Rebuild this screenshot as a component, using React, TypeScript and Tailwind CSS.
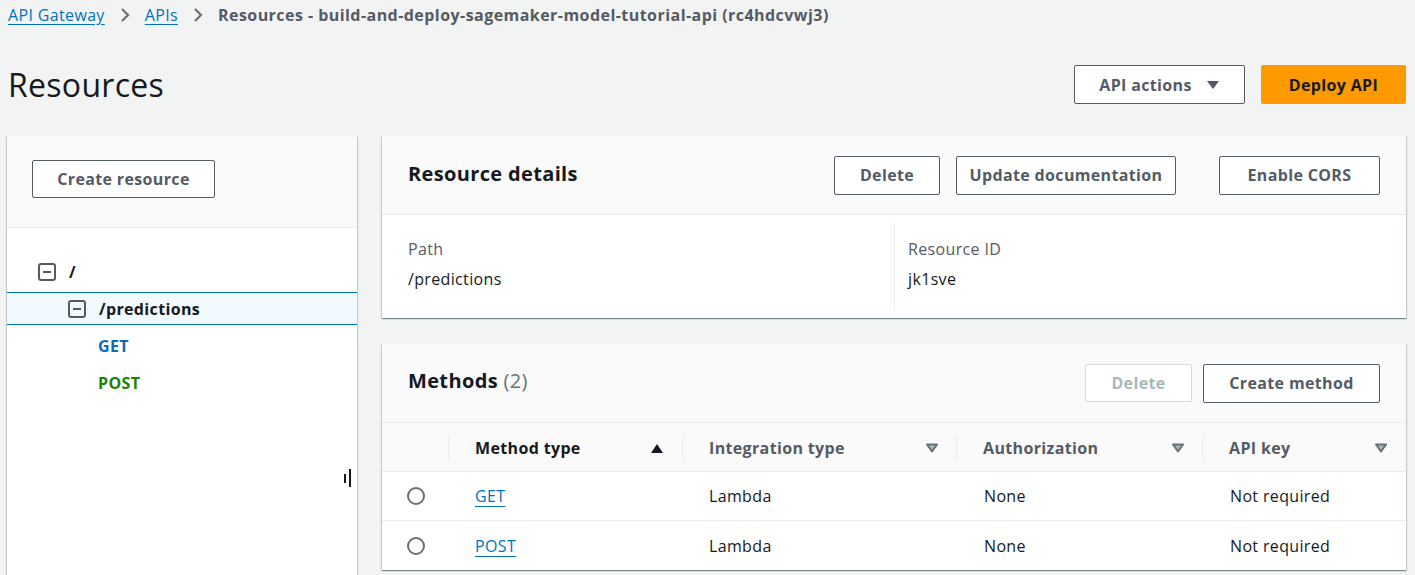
import React from "react";

const shadow =
  "shadow-[0_1px_1px_0_rgba(0,28,36,0.3),1px_1px_1px_0_rgba(0,28,36,0.15),-1px_1px_1px_0_rgba(0,28,36,0.15)]";

function Chevron() {
  return (
    <svg width="12" height="18" viewBox="0 0 12 18" className="mx-[14px]">
      <path d="M3 3l6 6-6 6" fill="none" stroke="#687078" strokeWidth="2.2" />
    </svg>
  );
}

function MinusBox() {
  return (
    <svg width="18" height="18" viewBox="0 0 18 18">
      <rect x="1" y="1" width="16" height="16" rx="2" fill="none" stroke="#545b64" strokeWidth="2" />
      <path d="M5 9h8" stroke="#545b64" strokeWidth="2" />
    </svg>
  );
}

function SortDown() {
  return (
    <svg width="14" height="12" viewBox="0 0 14 12">
      <path d="M2 2.5h10L7 9.5z" fill="#aab7b8" stroke="#687078" strokeWidth="2" strokeLinejoin="round" />
    </svg>
  );
}

function SortUp() {
  return (
    <svg width="14" height="12" viewBox="0 0 14 12">
      <path d="M1 11h12L7 2z" fill="#16191f" />
    </svg>
  );
}

function Btn({ children, w, disabled }: { children: React.ReactNode; w: string; disabled?: boolean }) {
  return (
    <button
      className={
        disabled
          ? `${w} h-[38px] rounded-[2px] border border-[#d5dbdb] bg-white text-[16px] font-bold text-[#aab7b8]`
          : `${w} h-[39px] rounded-[2px] border border-[#545b64] bg-white text-[16px] font-bold text-[#545b64]`
      }
    >
      {children}
    </button>
  );
}

const rows = [
  { m: "GET", i: "Lambda", a: "None", k: "Not required" },
  { m: "POST", i: "Lambda", a: "None", k: "Not required" },
];

export default function App() {
  return (
    <div className="min-h-screen bg-[#f2f3f3] px-[7px] font-['Open_Sans',sans-serif] text-[16px] tracking-[0.35px] text-[#16191f]">
      {/* breadcrumb */}
      <div className="flex h-[30px] items-center pl-[1px] text-[16px]">
        <span className="text-[#0073bb] underline underline-offset-[3px]">API Gateway</span>
        <Chevron />
        <span className="text-[#0073bb] underline underline-offset-[3px]">APIs</span>
        <Chevron />
        <span className="font-bold tracking-[0.45px] text-[#545b64]">
          Resources - build-and-deploy-sagemaker-model-tutorial-api (rc4hdcvwj3)
        </span>
      </div>

      {/* header */}
      <div className="flex h-[106px] items-center justify-between pl-[1px] pr-[2px] pt-[3px]">
        <h1 className="text-[32px] leading-[40px] tracking-[0.3px] text-[#16191f]">Resources</h1>
        <div className="flex gap-[16px]">
          <button className="flex h-[39px] w-[171px] items-center justify-center gap-[14px] rounded-[2px] border border-[#545b64] bg-white text-[16px] font-bold text-[#545b64]">
            API actions
            <svg width="14" height="10" viewBox="0 0 14 10">
              <path d="M1 1h12L7 9z" fill="#545b64" />
            </svg>
          </button>
          <button className="h-[39px] w-[145px] rounded-[2px] bg-[#ff9900] text-[16px] font-bold text-[#16191f]">
            Deploy API
          </button>
        </div>
      </div>

      <div className="flex gap-[25px]">
        {/* left tree panel */}
        <div className={`relative h-[445px] w-[350px] shrink-0 bg-white ${shadow}`}>
          <div className="h-[92px] border-b border-[#eaeded] bg-[#fafafa] pl-[25px] pt-[24px]">
            <button className="h-[38px] w-[183px] rounded-[2px] border border-[#545b64] bg-white text-[16px] font-bold text-[#545b64]">
              Create resource
            </button>
          </div>
          <div className="pt-[28px]">
            <div className="flex h-[32px] items-center gap-[13px] pl-[31px]">
              <MinusBox />
              <span className="font-bold">/</span>
            </div>
            <div className="mt-[4px] flex h-[33px] items-center gap-[13px] border-y border-[#0073bb] bg-[#f1faff] pl-[61px]">
              <MinusBox />
              <span className="font-bold">/predictions</span>
            </div>
            <div className="mt-[2px] flex h-[37px] items-center pl-[91px] font-bold text-[#0b6bb5]">GET</div>
            <div className="flex h-[37px] items-center pl-[91px] font-bold text-[#1d8102]">POST</div>
          </div>
          <div className="absolute left-[337px] top-[333px] flex items-center gap-[3px]">
            <div className="h-[9px] w-[2px] bg-[#16191f]" />
            <div className="h-[18px] w-[2px] bg-[#16191f]" />
          </div>
        </div>

        {/* right column */}
        <div className="flex w-[1024px] flex-col gap-[26px]">
          <div className={`bg-white ${shadow}`}>
            <div className="flex h-[79px] items-center justify-between border-b border-[#eaeded] bg-[#fafafa] px-[26px]">
              <h2 className="pb-[3px] text-[20px] font-bold">Resource details</h2>
              <div className="flex">
                <Btn w="w-[106px]">Delete</Btn>
                <div className="ml-[16px]">
                  <Btn w="w-[220px]">Update documentation</Btn>
                </div>
                <div className="ml-[43px]">
                  <Btn w="w-[161px]">Enable CORS</Btn>
                </div>
              </div>
            </div>
            <div className="grid h-[103px] grid-cols-2 py-[8px]">
              <div className="pl-[26px] pt-[14px]">
                <div className="leading-[24px] text-[#545b64]">Path</div>
                <div className="mt-[6px] leading-[24px]">/predictions</div>
              </div>
              <div className="border-l border-[#eaeded] pl-[13px] pt-[14px]">
                <div className="leading-[24px] text-[#545b64]">Resource ID</div>
                <div className="mt-[6px] leading-[24px]">jk1sve</div>
              </div>
            </div>
          </div>

          <div className={`bg-white ${shadow}`}>
            <div className="flex h-[79px] items-center justify-between border-b border-[#eaeded] bg-[#fafafa] px-[26px]">
              <h2 className="pb-[4px] text-[20px] font-bold">
                Methods <span className="font-normal text-[#687078]">(2)</span>
              </h2>
              <div className="flex gap-[11px]">
                <Btn w="w-[107px]" disabled>
                  Delete
                </Btn>
                <Btn w="w-[177px]">Create method</Btn>
              </div>
            </div>
            <div className="grid h-[49px] grid-cols-[67px_234px_274px_246px_203px] items-center border-b border-[#eaeded] bg-[#fafafa] pt-[1px] font-bold text-[#545b64]">
              <div className="h-[24px] border-r border-[#eaeded]" />
              <div className="flex h-[24px] items-center justify-between border-r border-[#eaeded] pl-[26px] pr-[18px] text-[#16191f]">
                Method type
                <SortUp />
              </div>
              <div className="flex h-[24px] items-center justify-between border-r border-[#eaeded] pl-[26px] pr-[17px]">
                Integration type
                <SortDown />
              </div>
              <div className="flex h-[24px] items-center justify-between border-r border-[#eaeded] pl-[26px] pr-[17px]">
                Authorization
                <SortDown />
              </div>
              <div className="flex h-[24px] items-center justify-between pl-[26px] pr-[18px]">
                API key
                <SortDown />
              </div>
            </div>
            {rows.map((r, idx) => (
              <div
                key={r.m}
                className={`grid h-[49px] grid-cols-[67px_234px_274px_246px_203px] items-center ${
                  idx === 0 ? "border-b border-[#eaeded]" : ""
                }`}
              >
                <div className="flex justify-end pr-[24px]">
                  <div className="h-[18px] w-[18px] rounded-full border-2 border-[#687078] bg-white" />
                </div>
                <div className="pl-[26px]">
                  <span className="text-[#0073bb] underline underline-offset-[4px]">{r.m}</span>
                </div>
                <div className="pl-[26px]">{r.i}</div>
                <div className="pl-[27px]">{r.a}</div>
                <div className="pl-[27px]">{r.k}</div>
              </div>
            ))}
          </div>
        </div>
      </div>
    </div>
  );
}
